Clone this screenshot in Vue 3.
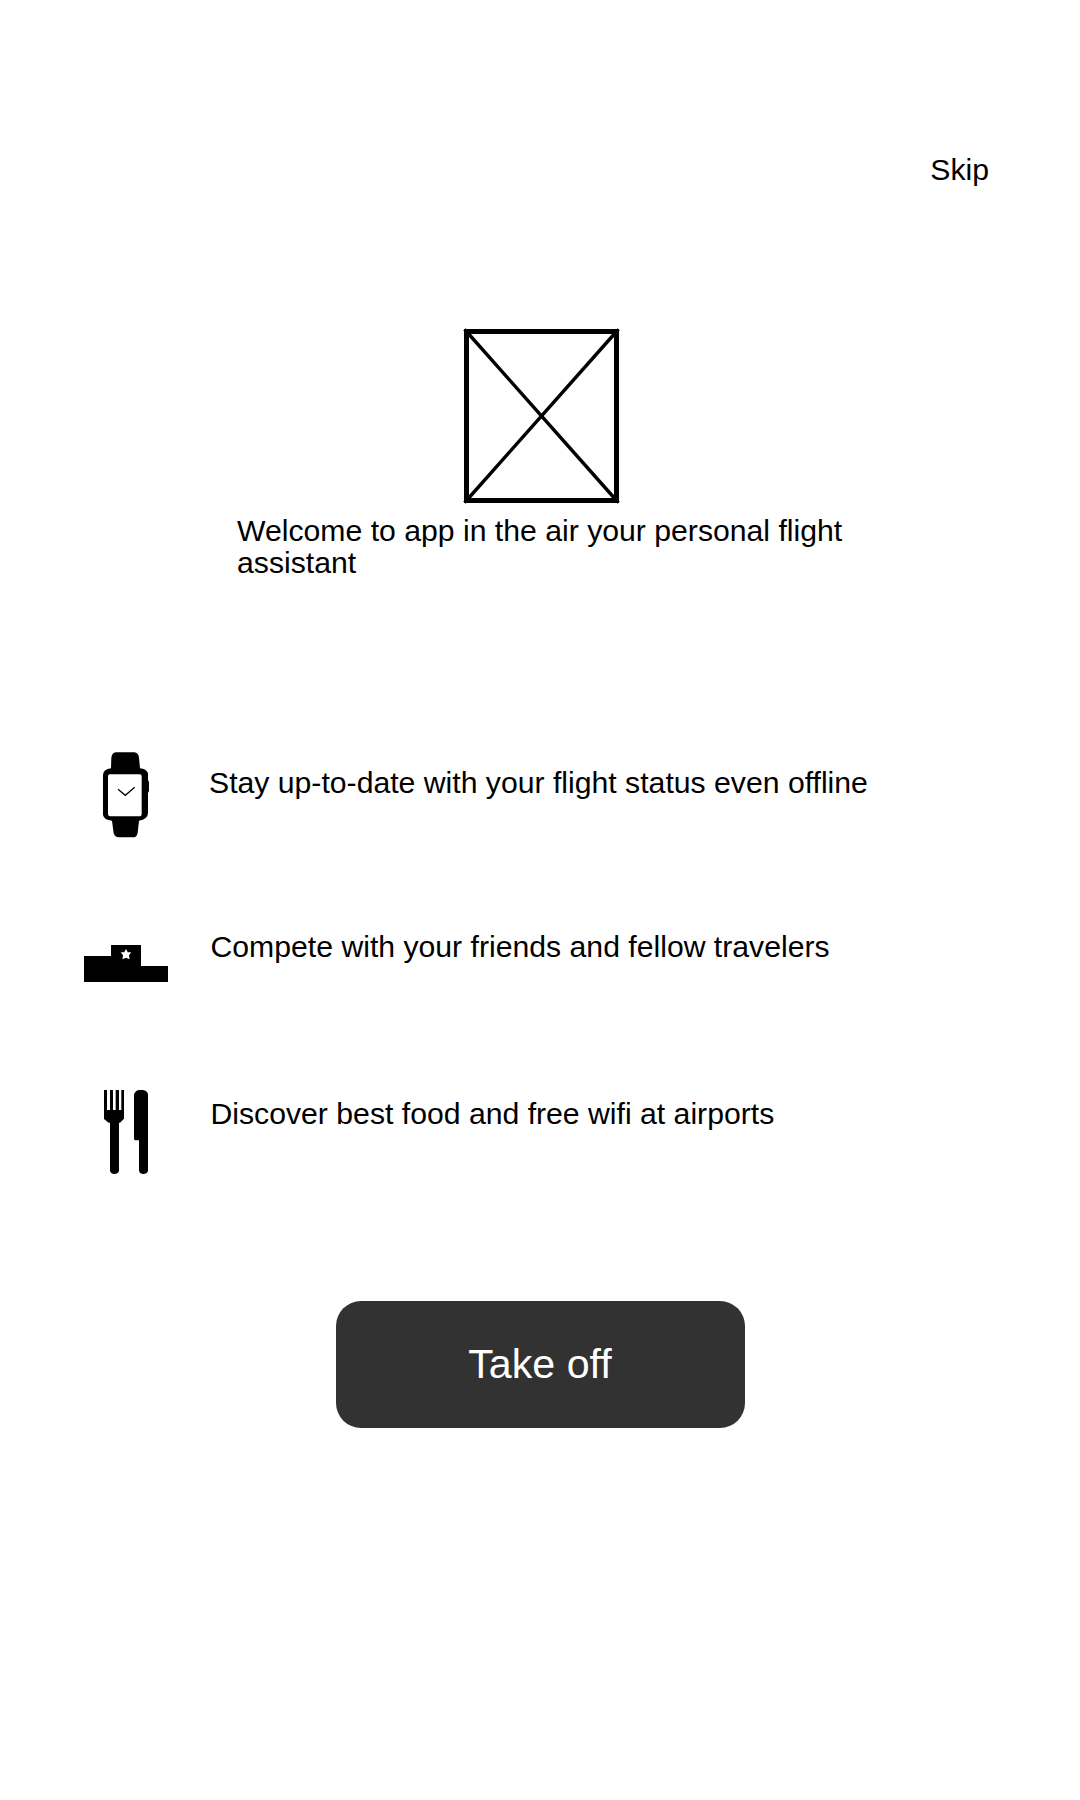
<script setup>
const features = [
  { icon: 'watch', text: 'Stay up-to-date with your flight status even offline' },
  { icon: 'podium', text: 'Compete with your friends and fellow travelers' },
  { icon: 'cutlery', text: 'Discover best food and free wifi at airports' },
]
</script>

<template>
  <main class="screen">
    <header class="top"><a class="skip">Skip</a></header>

    <section class="hero">
      <svg class="placeholder" width="157" height="176" viewBox="0 0 157 176">
        <path d="M3.5 3.5H153.5V172.5H3.5Z" fill="none" stroke="#000" stroke-width="5" shape-rendering="crispEdges" />
        <path d="M3.5 3.5L153.5 172.5M153.5 3.5L3.5 172.5" stroke="#000" stroke-width="3.4" />
        <path d="M0.5 2.5H5M2.5 0.5V5M152 2.5H156.5M154.5 0.5V5M0.5 173.5H5M2.5 171V175.5M152 173.5H156.5M154.5 171V175.5" stroke="#000" stroke-width="1" />
      </svg>
      <p class="welcome">Welcome to app in the air your personal flight assistant</p>
    </section>

    <ul class="features">
      <li v-for="f in features" :key="f.icon" class="feature" :class="f.icon">
        <svg v-if="f.icon === 'watch'" class="icon" width="46" height="86" viewBox="39 35 138 258">
          <path d="M63 84L64 52Q66 36 80 36H133Q145 37 147 52L150 84Q169 85 174 99V120L177 124V152L174 158V218Q173 237 147 241L143 277Q140 291 130 291H86Q75 291 71 279L66 241Q42 239 39 224V103Q41 86 63 84Z" />
          <path d="M59 102Q54 102 54 108V221Q54 228 61 228H148Q155 228 155 220V108Q155 102 149 102Z" fill="#fff" />
          <path d="M84 147L106 165L134 141" fill="none" stroke="#000" stroke-width="3.8" />
        </svg>
        <svg v-else-if="f.icon === 'podium'" class="icon" width="84" height="37" viewBox="0 0 84 37">
          <path d="M0 11H27V0H57V21H84V37H0Z" shape-rendering="crispEdges" />
          <path d="M42 4L43.8 7.2H47.2L45 10.2L45.5 14.2L42 12.7L38.5 14.2L39 10.2L36.8 7.2H40.2Z" fill="#fff" />
        </svg>
        <svg v-else class="icon" width="46" height="86" viewBox="39 42 138 258">
          <path d="M42 45H51V105H60V45H69V105H77V45H87V105H94V45H102V131L90 143H87V288Q84 297 73 297Q63 297 60 288V143H56L42 132Z" />
          <path d="M132 58Q137 45 149 45H159Q171 46 174 58V288Q171 297 160 297Q150 297 147 288V196H135L132 193Z" />
        </svg>
        <span class="label">{{ f.text }}</span>
      </li>
    </ul>

    <button class="takeoff" type="button">Take off</button>
  </main>
</template>

<style>
body {
  background: #fff;
}
</style>

<style scoped>
.screen {
  box-sizing: border-box;
  width: 1080px;
  height: 1800px;
  padding-top: 154px;
  display: flex;
  flex-direction: column;
  background: #fff;
  color: #000;
  font: 30.2px/32px "Liberation Sans", Arial, sans-serif;
}
.top {
  display: flex;
  justify-content: flex-end;
  padding-right: 91px;
  height: 174px;
}
.hero {
  display: flex;
  flex-direction: column;
  height: 423px;
}
.placeholder {
  display: block;
  margin-left: 463px;
}
.welcome {
  margin: 11px 0 0 237px;
  width: 640px;
}
.features {
  list-style: none;
  margin: 0;
  padding: 0 0 0 84px;
  height: 550px;
}
.feature {
  display: grid;
  grid-template-columns: 84px 1fr;
  column-gap: 42px;
  align-items: start;
  white-space: nowrap;
}
.icon {
  display: block;
  justify-self: center;
}
.watch {
  height: 180px;
}
.watch .icon {
  margin-top: 1px;
}
.watch .label {
  margin: 16px 0 0 -1px;
}
.podium {
  height: 158px;
}
.podium .icon {
  margin-top: 14px;
}
.podium .label {
  margin-left: 0.5px;
}
.cutlery .label {
  margin: 9px 0 0 0.5px;
}
.takeoff {
  align-self: center;
  width: 409px;
  height: 127px;
  padding: 0 0 2px;
  border: 0;
  border-radius: 25px;
  background: #323232;
  color: #fff;
  font: 41.2px/46px "Liberation Sans", Arial, sans-serif;
}
</style>
